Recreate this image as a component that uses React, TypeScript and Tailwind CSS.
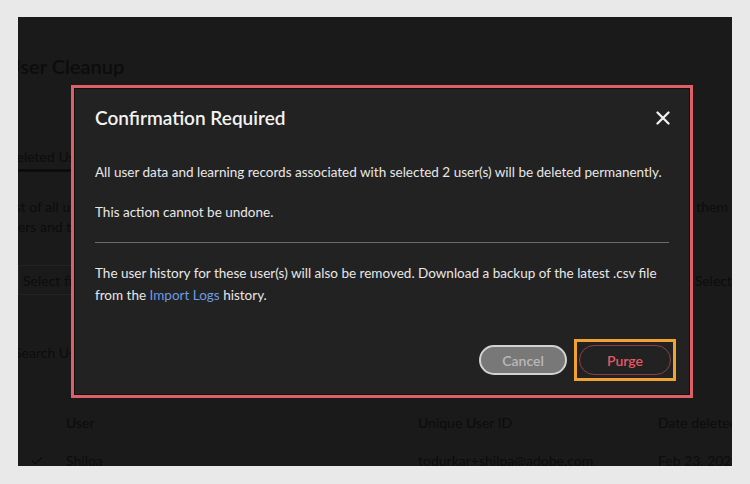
import React from 'react';
import { Check } from 'lucide-react';

// Page behind the overlay: only faint traces are visible
function BackgroundPage() {
  return (
    <div className="h-full w-full text-[#0c0c0c]">
      <h1 className="pt-[35px] -ml-[12px] text-[20px] font-semibold leading-[28px]">User Cleanup</h1>
      <div className="mt-[67px] border-b-[3px] border-[#0c0c0c] w-[200px]">
        <div className="-ml-[12px] pb-[2px] text-[14px] leading-[20px]">Deleted Users</div>
      </div>
      <div className="mt-[25px] flex justify-between text-[14px] leading-[20px]">
        <div className="-ml-[14px]">
          <div>List of all users</div>
          <div>users and their</div>
        </div>
        <div className="pr-[4px]">them</div>
      </div>
      <div className="mt-[28px] flex justify-between items-center">
        <div className="h-[30px] w-[160px] border border-[#242424] flex items-center pl-[4px] text-[14px]">Select file</div>
        <div className="text-[14px] whitespace-nowrap">Select</div>
      </div>
      <div className="mt-[48px] text-[14px] leading-[20px] -ml-[4px]">Search Users</div>
      <div className="mt-[50px] grid grid-cols-[48px_352px_240px_1fr] text-[14px] leading-[20px] whitespace-nowrap">
        <div />
        <div>User</div>
        <div>Unique User ID</div>
        <div>Date deleted</div>
      </div>
      <div className="mt-[18px] grid grid-cols-[48px_352px_240px_1fr] text-[14px] leading-[20px] whitespace-nowrap">
        <div className="pl-[12px] flex items-center">
          <Check size={14} strokeWidth={2} />
        </div>
        <div>Shilpa</div>
        <div>todurkar+shilpa@adobe.com</div>
        <div>Feb 23, 2023</div>
      </div>
    </div>
  );
}

function CloseIcon() {
  return (
    <svg width="14" height="14" viewBox="0 0 14 14" className="text-[#f0f0f0]">
      <path d="M1.5 1.5 L12.5 12.5 M12.5 1.5 L1.5 12.5" stroke="currentColor" strokeWidth="2.3" strokeLinecap="round" />
    </svg>
  );
}

function ConfirmDialog() {
  return (
    <div className="absolute left-[53px] top-[68px] w-[622px] h-[313px] border-[3px] border-[#df5f68] bg-[#222222] shadow-[inset_0_0_0_1px_#111]">
      <div className="px-[21px] pt-[17px]">
        <div className="flex items-center justify-between">
          <h2 className="text-[19px] leading-[26px] font-semibold text-[#f2f2f2]">Confirmation Required</h2>
          <div className="-mr-[1px]">
            <CloseIcon />
          </div>
        </div>
        <p className="mt-[31px] text-[13.5px] leading-[20px] text-[#e8e8e8]">
          All user data and learning records associated with selected 2 user(s) will be deleted permanently.
        </p>
        <p className="mt-[20px] text-[13.5px] leading-[20px] text-[#e8e8e8]">This action cannot be undone.</p>
        <div className="mt-[20px] h-px bg-[#6b6b6b]" />
        <p className="mt-[19px] text-[13.5px] leading-[22px] text-[#e8e8e8]">
          The user history for these user(s) will also be removed. Download a backup of the latest .csv file
          <br />
          from the <span className="text-[#6f9be0]">Import Logs</span> history.
        </p>
        <div className="mt-[33px] flex justify-end items-center gap-[7px] -mr-[7px]">
          <button className="h-[30px] w-[88px] rounded-full bg-[#787878] border-2 border-[#d2d2d2] text-[#b9b9b9] text-[14px] font-semibold">
            Cancel
          </button>
          <div className="border-[3px] border-[#f0a232] px-[2px] py-[3px]">
            <button className="h-[30px] w-[92px] rounded-full border-[1.5px] border-[#8d3f47] text-[#e05a64] text-[14px] font-semibold">
              Purge
            </button>
          </div>
        </div>
      </div>
    </div>
  );
}

export default function App() {
  return (
    <div className="w-[750px] h-[484px] bg-[#e9e9e9] pt-[17px] pl-[18px] font-['Lato','Noto_Sans',sans-serif]">
      <div className="relative w-[714px] h-[449px] bg-[#1a1a1a] overflow-hidden">
        <BackgroundPage />
        <ConfirmDialog />
      </div>
    </div>
  );
}
